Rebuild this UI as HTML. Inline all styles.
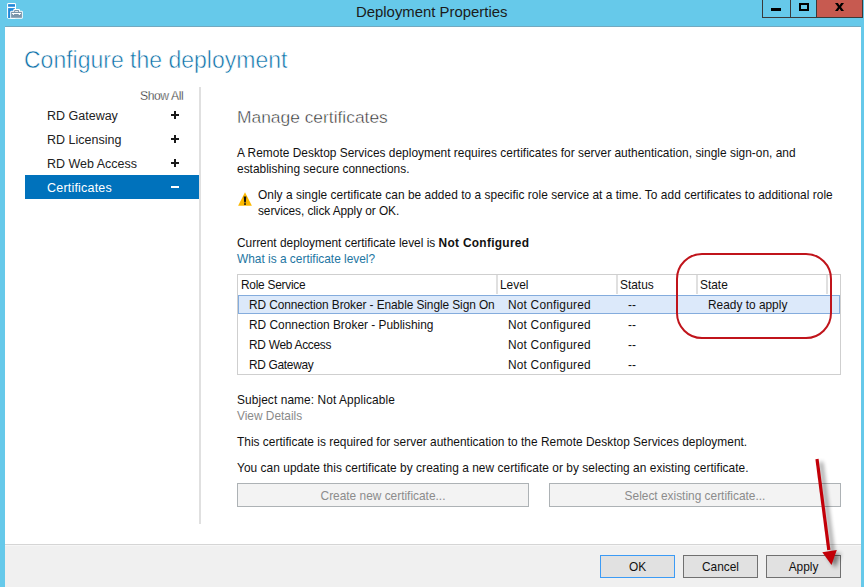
<!DOCTYPE html>
<html><head><meta charset="utf-8">
<style>
*{margin:0;padding:0;box-sizing:border-box}
html,body{width:864px;height:587px;overflow:hidden}
body{position:relative;background:#66c9ea;font-family:"Liberation Sans",sans-serif;color:#000}
.a{position:absolute;white-space:nowrap}
.t{font-size:11.9px;line-height:16px;color:#111}
#client{position:absolute;left:5px;top:26px;width:856px;height:561px;background:#fff;border-top:1px solid #72a9c0}
#footer{position:absolute;left:5px;top:544px;width:856px;height:43px;background:#f0f0f0;border-top:1px solid #d5d5d5;box-shadow:inset 0 1px 0 #f6f6f6}
.cb{position:absolute;top:0;height:18px;border:1px solid #3a3a3a;border-top:none}
.nav{font-size:12.5px;line-height:16px;color:#222}
.pm{position:absolute;left:171px;width:8px;height:2px;background:#1a1a1a}
.pv{position:absolute;left:174px;width:2px;height:8px;background:#1a1a1a}
.hdr{font-size:11.9px;line-height:16px;color:#111}
.btn{position:absolute;height:24px;border:1px solid #adb2b5;background:#f3f3f3;color:#8c8c8c;font-size:11.9px;line-height:23px;padding-top:1px;text-align:center}
.fb{position:absolute;top:555px;height:23px;width:75px;border:1px solid #adadad;background:#e1e1e1;font-size:11.9px;line-height:21px;padding-top:1px;text-align:center;color:#111}
</style></head><body>
<!-- title bar -->
<svg class="a" style="left:0;top:0" width="30" height="24" viewBox="0 0 30 24">
  <rect x="7.1" y="3.1" width="8.9" height="15.6" rx="1.4" fill="#fff"/>
  <rect x="8.1" y="4.15" width="6.9" height="2.6" fill="#2088d9"/>
  <rect x="8.1" y="8.1" width="6.7" height="9.9" fill="#2088d9"/>
  <path d="M10.2 12 Q10.2 10.8 11.4 10.8 H13.2 V10.2 Q13.2 9 14.4 9 H18.8 Q20 9 20 10.2 V10.8 H21.6 Q22.8 10.8 22.8 12 V17.5 Q22.8 18.7 21.6 18.7 H11.4 Q10.2 18.7 10.2 17.5 Z" fill="#fff"/>
  <rect x="11.1" y="11.8" width="10.8" height="6" fill="#7b95aa"/>
  <path d="M14.2 12 V10.6 Q14.2 10 14.8 10 H18.4 Q19 10 19 10.6 V12 H18.1 V10.9 H15.1 V12 Z" fill="#7b95aa"/>
  <path d="M11.9 12.9 H21 V14.1 H20.3 L19.8 14.9 H19 L18.5 14.1 H14.2 L13.7 14.9 H13.2 L12.7 14.1 H11.9 Z" fill="#fff"/>
</svg>
<div class="a" style="left:356px;top:3px;font-size:14.9px;line-height:18px;color:#1b1b1b">Deployment Properties</div>
<div class="cb" style="left:762px;width:29px;background:#66c9ea"><div class="a" style="left:8px;top:8px;width:10px;height:3px;background:#000"></div></div>
<div class="cb" style="left:791px;width:26px;background:#66c9ea;border-left:none"><div class="a" style="left:8px;top:3px;width:10px;height:8px;border:2px solid #000"></div></div>
<div class="cb" style="left:817px;width:46px;background:#c75a50;border-left:none">
<svg class="a" style="left:13px;top:0" width="20" height="14" viewBox="830 0 20 14"><path d="M835 3 H837.9 L839.5 5.5 L841.1 3 H844 L841 7 L844 11 H841.1 L839.5 8.5 L837.9 11 H835 L838 7 Z" fill="#000"/></svg></div>

<div id="client"></div>
<div id="footer"></div>

<div class="a" style="left:24px;top:45px;font-size:23px;line-height:30px;color:#0b70a8;-webkit-text-stroke:0.55px #fff">Configure the deployment</div>

<!-- nav -->
<div class="a" style="left:199px;top:87px;width:2px;height:437px;background:#e0e0e0"></div>
<div class="a" style="left:140px;top:89px;font-size:12.2px;line-height:15px;color:#111;letter-spacing:-0.45px;-webkit-text-stroke:0.3px #fff">Show All</div>
<div class="a nav" style="left:47px;top:108px">RD Gateway</div>
<div class="pm" style="top:114px"></div><div class="pv" style="top:111px"></div>
<div class="a nav" style="left:47px;top:132px">RD Licensing</div>
<div class="pm" style="top:138px"></div><div class="pv" style="top:135px"></div>
<div class="a nav" style="left:47px;top:156px">RD Web Access</div>
<div class="pm" style="top:162px"></div><div class="pv" style="top:159px"></div>
<div class="a" style="left:25px;top:175px;width:174px;height:24px;background:#0072bc"></div>
<div class="a nav" style="left:47px;top:180px;color:#fff;letter-spacing:0.2px">Certificates</div>
<div class="a" style="left:171px;top:186px;width:8px;height:2px;background:#fff"></div>

<!-- content -->
<div class="a" style="left:237px;top:106px;font-size:17.4px;line-height:23px;color:#2a2a2a;-webkit-text-stroke:0.45px #fff">Manage certificates</div>
<div class="a t" style="left:237px;top:145px;letter-spacing:0.02px">A Remote Desktop Services deployment requires certificates for server authentication, single sign-on, and<br>establishing secure connections.</div>
<svg class="a" style="left:238px;top:192px" width="14" height="14" viewBox="0 0 14 14">
  <path d="M7 0.3 L13.9 13.8 L0.1 13.8 Z" fill="#fcb900"/>
  <path d="M5.7 4.6 H8.3 L7.8 10.4 H6.2 Z" fill="#111"/>
  <rect x="6.15" y="11.2" width="1.7" height="1.7" fill="#111"/>
</svg>
<div class="a t" style="left:258px;top:187px;letter-spacing:0.04px">Only a single certificate can be added to a specific role service at a time. To add certificates to additional role<br><span style="letter-spacing:-0.08px">services, click Apply or OK.</span></div>
<div class="a t" style="left:237px;top:235px">Current deployment certificate level is <b style="letter-spacing:0.3px">Not Configured</b></div>
<div class="a t" style="left:237px;top:251px;color:#1e76a2">What is a certificate level?</div>

<!-- table -->
<div class="a" style="left:237px;top:274px;width:604px;height:101px;border:1px solid #cfcfcf"></div>
<div class="a" style="left:496px;top:275px;width:2px;height:19px;background:#e0e0e0"></div>
<div class="a" style="left:616px;top:275px;width:2px;height:19px;background:#e0e0e0"></div>
<div class="a" style="left:696px;top:275px;width:2px;height:19px;background:#e0e0e0"></div>
<div class="a" style="left:826px;top:275px;width:2px;height:19px;background:#e0e0e0"></div>
<div class="a hdr" style="left:241px;top:277px;letter-spacing:-0.25px">Role Service</div>
<div class="a hdr" style="left:500px;top:277px">Level</div>
<div class="a hdr" style="left:620px;top:277px">Status</div>
<div class="a hdr" style="left:700px;top:277px">State</div>
<div class="a" style="left:238px;top:295px;width:602px;height:19px;background:#dce9fa;border:1px solid #84acdd"></div>
<div class="a t" style="left:249px;top:297px;letter-spacing:-0.08px">RD Connection Broker - Enable Single Sign On</div>
<div class="a t" style="left:508px;top:297px;letter-spacing:0.2px">Not Configured</div>
<div class="a t" style="left:628px;top:297px">--</div>
<div class="a t" style="left:708px;top:297px">Ready to apply</div>
<div class="a t" style="left:249px;top:317px">RD Connection Broker - Publishing</div>
<div class="a t" style="left:508px;top:317px;letter-spacing:0.2px">Not Configured</div>
<div class="a t" style="left:628px;top:317px">--</div>
<div class="a t" style="left:249px;top:337px;letter-spacing:-0.27px">RD Web Access</div>
<div class="a t" style="left:508px;top:337px;letter-spacing:0.2px">Not Configured</div>
<div class="a t" style="left:628px;top:337px">--</div>
<div class="a t" style="left:249px;top:357px;letter-spacing:-0.3px">RD Gateway</div>
<div class="a t" style="left:508px;top:357px;letter-spacing:0.2px">Not Configured</div>
<div class="a t" style="left:628px;top:357px">--</div>

<!-- red highlight -->
<div class="a" style="left:676px;top:253px;width:156px;height:86px;border:2.3px solid #c0141b;border-radius:26px"></div>

<div class="a t" style="left:237px;top:392px;letter-spacing:0.09px">Subject name: Not Applicable</div>
<div class="a t" style="left:237px;top:408px;color:#8a8a8a">View Details</div>
<div class="a t" style="left:237px;top:434px;letter-spacing:0.02px">This certificate is required for server authentication to the Remote Desktop Services deployment.</div>
<div class="a t" style="left:237px;top:460px;letter-spacing:0.05px">You can update this certificate by creating a new certificate or by selecting an existing certificate.</div>
<div class="btn" style="left:237px;top:483px;width:292px">Create new certificate...</div>
<div class="btn" style="left:549px;top:483px;width:292px">Select existing certificate...</div>

<!-- footer buttons -->
<div class="fb" style="left:600px;border-color:#3c9bf5">OK</div>
<div class="fb" style="left:683px;border-color:#707070">Cancel</div>
<div class="fb" style="left:766px;border-color:#707070">Apply</div>

<!-- arrow -->
<svg class="a" style="left:790px;top:440px" width="74" height="147" viewBox="0 0 74 147">
  <defs><filter id="sh" x="-100%" y="-50%" width="300%" height="200%"><feGaussianBlur stdDeviation="2.2"/></filter></defs>
  <g transform="translate(4,3)" opacity="0.45" filter="url(#sh)">
    <path d="M27 19 L38.8 110" stroke="#000" stroke-width="3.2"/>
    <path d="M32.3 112.3 L46.8 110 L41.5 124.9 Z" fill="#000"/>
  </g>
  <path d="M27 19 L38.8 110" stroke="#c20008" stroke-width="3.2"/>
  <path d="M32.3 112.3 L46.8 110 L41.5 124.9 Z" fill="#c20008"/>
</svg>
</body></html>
